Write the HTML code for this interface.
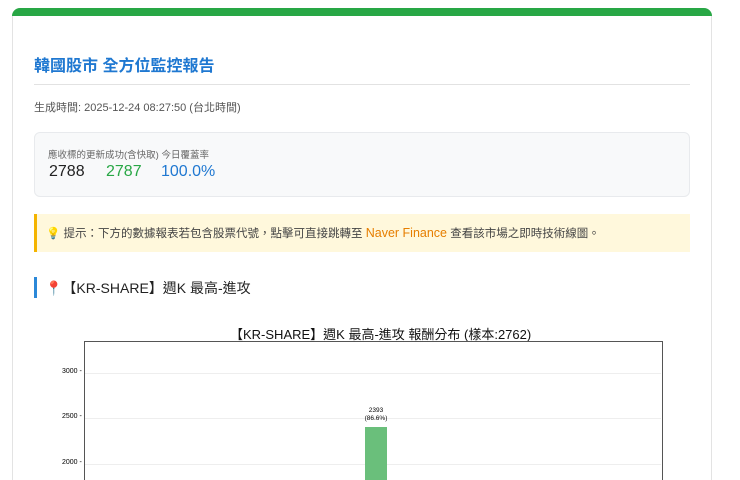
<!DOCTYPE html>
<html><head><meta charset="utf-8"><style>
html,body{margin:0;height:480px;overflow:hidden}
body{background:#fff;font-family:"Liberation Sans","Noto Sans CJK TC",sans-serif;width:740px;position:relative}
.card{position:absolute;left:12px;top:8px;width:698px;height:472px;border-left:1px solid #e3e3e3;border-right:1px solid #e3e3e3;border-radius:8px 8px 0 0;background:#fff}
.bar{position:absolute;left:12px;top:8px;width:700px;height:8px;background:#28a745;border-radius:8px 8px 0 0}
.abs{position:absolute;white-space:nowrap}
</style></head><body>
<div class="card"></div><div class="bar"></div>
<div class="abs" style="left:34px;top:52px;font-size:16px;font-weight:bold;color:#1f78d1">韓國股市 全方位監控報告</div>
<div class="abs" style="left:34px;top:84px;width:656px;height:1px;background:#e2e2e2"></div>
<div class="abs" style="left:34px;top:99px;font-size:11px;color:#555">生成時間: 2025-12-24 08:27:50 (台北時間)</div>
<div class="abs" style="left:34px;top:132px;width:654px;height:63px;background:#f8f9fa;border:1px solid #e8eaed;border-radius:6px"></div>
<div class="abs" style="left:48px;top:147px;font-size:9.5px;color:#666">應收標的更新成功(含快取) 今日覆蓋率</div>
<div class="abs" style="left:49px;top:163px;font-size:16px;color:#222">2788</div>
<div class="abs" style="left:106px;top:163px;font-size:16px;color:#28a745">2787</div>
<div class="abs" style="left:161px;top:163px;font-size:16px;color:#1f78d1">100.0%</div>
<div class="abs" style="left:34px;top:214px;width:653px;height:38px;background:#fff8dc;border-left:3px solid #f4b400"></div>
<div class="abs" style="left:46px;top:225px;font-size:11.5px;color:#444">💡 提示：下方的數據報表若包含股票代號，點擊可直接跳轉至 <span style="color:#e67e00;font-size:12.5px">Naver Finance</span> 查看該市場之即時技術線圖。</div>
<div class="abs" style="left:34px;top:277px;width:3px;height:21px;background:#2b88d8"></div>
<div class="abs" style="left:45px;top:278px;font-size:14px;color:#222">📍【KR-SHARE】週K 最高-進攻</div>
<div class="abs" style="left:230px;top:324px;font-size:13px;color:#111">【KR-SHARE】週K 最高-進攻 報酬分布 (樣本:2762)</div>
<div class="abs" style="left:84px;top:341px;width:577px;height:139px;border:1px solid #555;border-bottom:none"></div>
<div class="abs" style="left:85px;top:373px;width:576px;height:1px;background:#eee"></div>
<div class="abs" style="left:85px;top:418px;width:576px;height:1px;background:#eee"></div>
<div class="abs" style="left:85px;top:464px;width:576px;height:1px;background:#eee"></div>
<div class="abs" style="left:62px;top:368px;font-size:7px">3000 -</div>
<div class="abs" style="left:62px;top:413px;font-size:7px">2500 -</div>
<div class="abs" style="left:62px;top:459px;font-size:7px">2000 -</div>
<div class="abs" style="left:365px;top:427px;width:22px;height:53px;background:#6abf7b"></div>
<div class="abs" style="left:361px;top:407px;width:30px;text-align:center;font-size:6.5px;line-height:8px">2393<br>(86.6%)</div>
</body></html>
